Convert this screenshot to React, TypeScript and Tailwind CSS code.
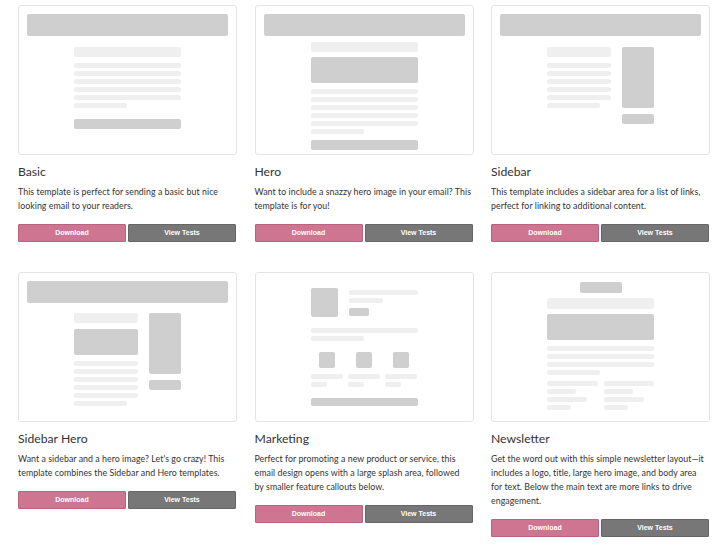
import React from 'react';

// Mockup primitives: dark = image/button blocks, light = text lines
const Dark = ({ className = '' }: { className?: string }) => (
  <div className={`bg-[#cfcfcf] rounded-[2px] ${className}`} />
);
const Light = ({ className = '' }: { className?: string }) => (
  <div className={`bg-[#efefef] rounded-[2px] ${className}`} />
);

const Header = () => <Dark className="h-[22px] mx-[8px] mt-[8px]" />;

const TextLines = ({ count = 5 }: { count?: number }) => (
  <div className="flex flex-col gap-[3px]">
    {Array.from({ length: count }).map((_, i) => (
      <Light key={i} className="h-[5px] w-full" />
    ))}
    <Light className="h-[5px] w-[53px]" />
  </div>
);

const BasicMock = () => (
  <>
    <Header />
    <div className="w-[107px] mx-auto mt-[11px]">
      <Light className="h-[10px]" />
      <div className="mt-[6px]">
        <TextLines />
      </div>
      <Dark className="h-[10px] mt-[11px]" />
    </div>
  </>
);

const HeroMock = () => (
  <>
    <Header />
    <div className="w-[107px] mx-auto mt-[6px]">
      <Light className="h-[10px]" />
      <Dark className="h-[26px] mt-[5px]" />
      <div className="mt-[6px]">
        <TextLines />
      </div>
      <Dark className="h-[10px] mt-[6px]" />
    </div>
  </>
);

const SidebarMock = () => (
  <>
    <Header />
    <div className="w-[107px] mx-auto mt-[11px] flex gap-[11px]">
      <div className="w-[64px]">
        <Light className="h-[10px]" />
        <div className="mt-[6px]">
          <TextLines />
        </div>
      </div>
      <div className="w-[32px]">
        <Dark className="h-[61px]" />
        <Dark className="h-[10px] mt-[6px]" />
      </div>
    </div>
  </>
);

const SidebarHeroMock = () => (
  <>
    <Header />
    <div className="w-[107px] mx-auto mt-[10px] flex gap-[11px]">
      <div className="w-[64px]">
        <Light className="h-[10px]" />
        <Dark className="h-[26px] mt-[6px]" />
        <div className="mt-[6px]">
          <TextLines />
        </div>
      </div>
      <div className="w-[32px]">
        <Dark className="h-[61px]" />
        <Dark className="h-[10px] mt-[6px]" />
      </div>
    </div>
  </>
);

const MarketingMock = () => (
  <div className="w-[107px] mx-auto mt-[15px]">
    <div className="flex gap-[11px]">
      <Dark className="w-[27px] h-[29px]" />
      <div className="flex-1 pt-[2px]">
        <Light className="h-[5px]" />
        <Light className="h-[5px] w-[34px] mt-[3px]" />
        <Dark className="h-[8px] w-[20px] mt-[5px]" />
      </div>
    </div>
    <Light className="h-[5px] mt-[11px]" />
    <Light className="h-[5px] w-[53px] mt-[3px]" />
    <div className="flex gap-[5px] mt-[11px]">
      {[0, 1, 2].map((i) => (
        <div key={i} className="flex-1">
          <Dark className="w-[16px] h-[16px] mx-auto" />
          <Light className="h-[5px] mt-[6px]" />
          <Light className="h-[5px] w-[16px] mt-[3px]" />
        </div>
      ))}
    </div>
    <Dark className="h-[8px] mt-[11px]" />
  </div>
);

const NewsletterMock = () => (
  <div className="w-[107px] mx-auto mt-[9px]">
    <Dark className="w-[42px] h-[11px] mx-auto" />
    <Light className="h-[11px] mt-[5px]" />
    <Dark className="h-[26px] mt-[5px]" />
    <div className="flex flex-col gap-[3px] mt-[6px]">
      <Light className="h-[5px]" />
      <Light className="h-[5px]" />
      <Light className="h-[5px]" />
      <Light className="h-[5px] w-[53px]" />
    </div>
    <div className="flex gap-[6px] mt-[6px]">
      {[0, 1].map((i) => (
        <div key={i} className="flex-1 flex flex-col gap-[3px]">
          <Light className="h-[5px] w-full" />
          <Light className="h-[5px] w-[29px]" />
          <Light className="h-[5px] w-[40px]" />
          <Light className="h-[5px] w-[24px]" />
        </div>
      ))}
    </div>
  </div>
);

interface Template {
  name: string;
  description: string;
  mock: React.ReactNode;
}

const templates: Template[] = [
  {
    name: 'Basic',
    description: 'This template is perfect for sending a basic but nice looking email to your readers.',
    mock: <BasicMock />,
  },
  {
    name: 'Hero',
    description: 'Want to include a snazzy hero image in your email? This template is for you!',
    mock: <HeroMock />,
  },
  {
    name: 'Sidebar',
    description: 'This template includes a sidebar area for a list of links, perfect for linking to additional content.',
    mock: <SidebarMock />,
  },
  {
    name: 'Sidebar Hero',
    description: "Want a sidebar and a hero image? Let's go crazy! This template combines the Sidebar and Hero templates.",
    mock: <SidebarHeroMock />,
  },
  {
    name: 'Marketing',
    description:
      'Perfect for promoting a new product or service, this email design opens with a large splash area, followed by\u00a0smaller feature callouts below.',
    mock: <MarketingMock />,
  },
  {
    name: 'Newsletter',
    description:
      'Get the word out with this simple newsletter layout\u2014it includes a logo, title, large hero image, and body area for\u00a0text. Below the main text are more links to drive engagement.',
    mock: <NewsletterMock />,
  },
];

const TemplateCard = ({ t }: { t: Template }) => (
  <div className="flex flex-col">
    <div className="h-[150px] bg-white border border-[#e4e4e4] rounded-[3px] overflow-hidden">{t.mock}</div>
    <h3 className="mt-[9px] text-[12.2px] leading-[16px] text-[#333]">{t.name}</h3>
    <p className="mt-[5px] text-[8.8px] leading-[14px] tracking-[0.05px] text-[#333]">{t.description}</p>
    <div className="mt-[11px] flex gap-[2px] pr-[1px]">
      <button className="flex-1 h-[18px] bg-[#cd7591] border border-[#b9637f] rounded-[1px] text-white text-[7px] font-bold font-['Liberation_Sans',Arial,sans-serif]">
        Download
      </button>
      <button className="flex-1 h-[18px] bg-[#777777] border border-[#666666] rounded-[1px] text-white text-[7px] font-bold font-['Liberation_Sans',Arial,sans-serif]">
        View Tests
      </button>
    </div>
  </div>
);

export default function App() {
  return (
    <div
      className="w-[725px] h-[560px] bg-white overflow-hidden pl-[18px] pt-[5px]"
      style={{ fontFamily: 'Lato, "Open Sans", Arial, sans-serif' }}
    >
      <div className="w-[692px] grid grid-cols-3 gap-x-[17.5px] gap-y-[30px] items-start">
        {templates.map((t) => (
          <TemplateCard key={t.name} t={t} />
        ))}
      </div>
    </div>
  );
}
